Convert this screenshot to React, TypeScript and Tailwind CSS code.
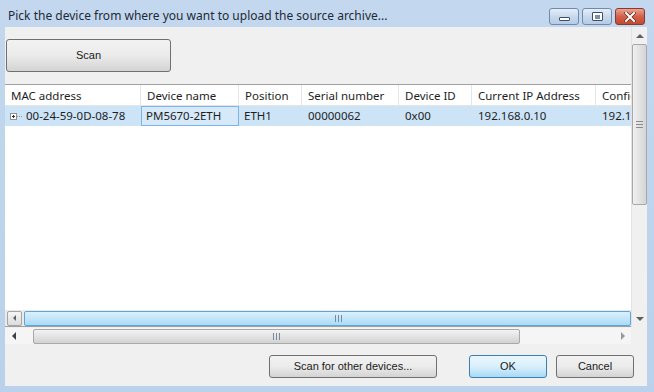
import React from 'react';

const uiFont = { fontFamily: '"Noto Sans", "Open Sans", sans-serif' };
const btnFont = { fontFamily: '"Liberation Sans", Arial, sans-serif' };

const columns = [
  { title: 'MAC address', w: 'w-[136px]' },
  { title: 'Device name', w: 'w-[98px]' },
  { title: 'Position', w: 'w-[63px]' },
  { title: 'Serial number', w: 'w-[97px]' },
  { title: 'Device ID', w: 'w-[73px]' },
  { title: 'Current IP Address', w: 'w-[124px]' },
  { title: 'Configured IP Address', w: 'w-[140px]' },
];

function Grip({ vertical }: { vertical?: boolean }) {
  // the little "III" ridges on a win7 scrollbar thumb
  return (
    <div className={`flex ${vertical ? 'flex-col gap-[2px]' : 'flex-row gap-[2px]'}`}>
      {[0, 1, 2].map((i) => (
        <div
          key={i}
          className={vertical ? 'w-[7px] h-[1px] bg-[#8a8a8a]' : 'w-[1px] h-[7px] bg-[#7a8a99]'}
        />
      ))}
    </div>
  );
}

function CaptionButton({ kind }: { kind: 'min' | 'max' | 'close' }) {
  if (kind === 'close') {
    return (
      <div className="w-[30px] h-[17px] rounded-[3px] border border-[#8a3a2c] bg-gradient-to-b from-[#e8a393] via-[#d2614a] to-[#c44a32] flex items-center justify-center">
        <svg width="12" height="10" viewBox="0 0 12 10">
          <path d="M2 1 L10 9 M10 1 L2 9" stroke="#5a2218" strokeWidth="3.2" strokeLinecap="square" />
          <path d="M2 1 L10 9 M10 1 L2 9" stroke="#ffffff" strokeWidth="2" strokeLinecap="square" />
        </svg>
      </div>
    );
  }
  return (
    <div className="w-[30px] h-[17px] rounded-[3px] border border-[#6d8bb0] bg-gradient-to-b from-[#e6eef8] via-[#c9d9ec] to-[#b6cbe4] flex items-center justify-center">
      {kind === 'min' ? (
        <div className="w-[11px] h-[4px] mt-[5px] border border-[#3b4f6b] bg-white rounded-[1px]" />
      ) : (
        <div className="w-[11px] h-[9px] border border-[#3b4f6b] bg-white rounded-[1px] flex items-center justify-center">
          <div className="w-[5px] h-[4px] bg-[#7d8ea5]" />
        </div>
      )}
    </div>
  );
}

function Button({ label, w, primary }: { label: string; w: string; primary?: boolean }) {
  return (
    <button
      style={btnFont}
      className={`${w} h-[23px] rounded-[3px] border text-[11px] text-[#1a1a1a] ${
        primary
          ? 'border-[#3c7fb1] bg-gradient-to-b from-[#eaf6fd] via-[#d9f0fc] to-[#a7d9f5]'
          : 'border-[#707070] bg-gradient-to-b from-[#f2f2f2] via-[#ebebeb] to-[#d4d4d4]'
      }`}
    >
      {label}
    </button>
  );
}

export default function App() {
  return (
    <div className="w-[654px] h-[392px] bg-gradient-to-b from-[#c3d8ee] to-[#b9d1ea] flex flex-col overflow-hidden">
      {/* title bar */}
      <div className="h-[27px] flex items-start shrink-0">
        <div style={uiFont} className="pl-[8px] pt-[9px] text-[12px] leading-[14px] text-[#1e2a38] flex-1">
          Pick the device from where you want to upload the source archive...
        </div>
        <div className="flex gap-[3px] pt-[8px] pr-[9px]">
          <CaptionButton kind="min" />
          <CaptionButton kind="max" />
          <CaptionButton kind="close" />
        </div>
      </div>

      {/* client area */}
      <div className="mx-[5px] mb-[6px] w-[642px] flex-1 bg-[#f0f0f0] flex flex-col">
        <div className="h-[300px] flex">
          {/* scrolled content */}
          <div className="w-[626px] flex flex-col overflow-hidden">
            <div className="pt-[12px] pl-[1px]">
              <Button label="Scan" w="w-[165px] h-[33px]" />
            </div>

            <div className="mt-[12px] flex-1 flex flex-col bg-white border-t border-[#a0a0a0] border-b border-b-[#a0a0a0] overflow-hidden">
              {/* header */}
              <div style={uiFont} className="flex h-[21px] shrink-0 border-b border-[#e5e5e5] text-[11.5px] text-[#1e1e1e]">
                {columns.map((c) => (
                  <div key={c.title} className={`${c.w} shrink-0 pl-[6px] pt-[2px] leading-[18px] border-r border-[#e5e5e5] whitespace-nowrap overflow-hidden`}>
                    {c.title}
                  </div>
                ))}
              </div>

              {/* the one device */}
              <div style={uiFont} className="flex h-[20px] shrink-0 bg-[#cde4f7] text-[11.5px] text-[#1e1e1e] leading-[20px]">
                <div className="w-[136px] shrink-0 flex items-center">
                  <div className="ml-[5px] w-[7px] h-[7px] border border-[#919191] bg-white flex items-center justify-center relative">
                    <div className="absolute w-[3px] h-[1px] bg-[#333]" />
                    <div className="absolute w-[1px] h-[3px] bg-[#333]" />
                  </div>
                  <div className="w-[5px] border-t border-dotted border-[#999]" />
                  <span className="pl-[4px]">00-24-59-0D-08-78</span>
                </div>
                <div className="w-[98px] shrink-0 border border-[#7eb4ea] bg-[#d6e9f8] pl-[4px] leading-[18px]">PM5670-2ETH</div>
                <div className="w-[63px] shrink-0 pl-[5px]">ETH1</div>
                <div className="w-[97px] shrink-0 pl-[6px]">00000062</div>
                <div className="w-[73px] shrink-0 pl-[6px]">0x00</div>
                <div className="w-[124px] shrink-0 pl-[6px]">192.168.0.10</div>
                <div className="w-[140px] shrink-0 pl-[6px] whitespace-nowrap">192.168.0.10</div>
              </div>

              <div className="flex-1" />

              {/* grid's own horizontal scrollbar */}
              <div className="h-[16px] shrink-0 flex items-center bg-[#eaeaea] pl-[2px]">
                <div className="w-[15px] h-[15px] border border-[#a5a5a5] rounded-[2px] bg-gradient-to-b from-[#f5f5f5] to-[#dcdcdc] flex items-center justify-center">
                  <div className="w-0 h-0 border-y-[3px] border-y-transparent border-r-[3px] border-r-[#606060]" />
                </div>
                <div className="ml-[2px] flex-1 h-[15px] border border-[#5fa6d8] rounded-[2px] bg-gradient-to-b from-[#dcf0fc] to-[#a9dbf6] flex items-center pl-[310px]">
                  <Grip />
                </div>
              </div>
            </div>
          </div>

          {/* form vertical scrollbar */}
          <div className="w-[16px] flex flex-col items-center bg-[#f0f0f0] border-l border-[#e3e3e3]">
            <div className="h-[17px] flex items-center justify-center">
              <div className="w-0 h-0 border-x-[4px] border-x-transparent border-b-[4px] border-b-[#606060]" />
            </div>
            <div className="w-[15px] h-[161px] border border-[#a8a8a8] rounded-[2px] bg-gradient-to-r from-[#f0f0f0] via-[#e2e2e2] to-[#d5d5d5] flex items-center justify-center">
              <Grip vertical />
            </div>
            <div className="flex-1" />
            <div className="h-[17px] flex items-center justify-center">
              <div className="w-0 h-0 border-x-[4px] border-x-transparent border-t-[4px] border-t-[#606060]" />
            </div>
          </div>
        </div>

        {/* form horizontal scrollbar */}
        <div className="h-[16px] flex shrink-0 mt-[1px]">
          <div className="w-[626px] flex items-center bg-[#f5f5f5]">
            <div className="w-[17px] flex items-center justify-center">
              <div className="w-0 h-0 border-y-[4px] border-y-transparent border-r-[4px] border-r-[#404040]" />
            </div>
            <div className="ml-[11px] w-[487px] h-[15px] border border-[#a8a8a8] rounded-[2px] bg-gradient-to-b from-[#f2f2f2] via-[#e3e3e3] to-[#d2d2d2] flex items-center justify-center">
              <Grip />
            </div>
            <div className="flex-1" />
            <div className="w-[17px] flex items-center justify-center">
              <div className="w-0 h-0 border-y-[4px] border-y-transparent border-l-[4px] border-l-[#9a9a9a]" />
            </div>
          </div>
          <div className="flex-1" />
        </div>

        {/* buttons */}
        <div className="flex-1 flex items-start justify-end pt-[11px] pr-[13px]">
          <Button label="Scan for other devices..." w="w-[168px]" />
          <div className="w-[32px]" />
          <Button label="OK" w="w-[78px]" primary />
          <div className="w-[9px]" />
          <Button label="Cancel" w="w-[78px]" />
        </div>
      </div>
    </div>
  );
}
